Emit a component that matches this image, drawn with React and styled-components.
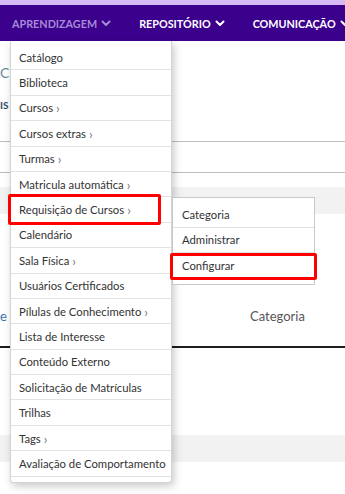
import React from "react";
import styled, { createGlobalStyle } from "styled-components";

const Global = createGlobalStyle`
  html, body { margin: 0; padding: 0; background: #fff; }
  body { font-family: Lato, "Noto Sans", sans-serif; }
  * { box-sizing: border-box; }
`;

const Page = styled.div`
  position: relative;
  width: 345px;
  height: 494px;
  overflow: hidden;
  background: #fff;
`;

const TopStrip = styled.div`
  height: 5px;
  background: #d7baf5;
`;

const Nav = styled.nav`
  height: 36px;
  background: #3b008c;
  display: flex;
  align-items: center;
  padding-left: 12px;
  gap: 28px;
  white-space: nowrap;
`;

const NavItem = styled.div`
  display: flex;
  align-items: center;
  gap: 4px;
  font-size: 10.8px;
  font-weight: 700;
  color: ${(p) => (p.$active ? "#a68ad8" : "#ffffff")};
`;

const Chevron = ({ color }) => (
  <svg width="10" height="7" viewBox="0 0 10 7">
    <path d="M1.5 1.5 L5 5 L8.5 1.5" fill="none" stroke={color} strokeWidth="2" strokeLinecap="round" strokeLinejoin="round" />
  </svg>
);

const Content = styled.div`
  position: relative;
  height: 453px;
`;

const Title = styled.div`
  padding-top: 22px;
  font-size: 14px;
  line-height: 20px;
  color: #5f8c9a;
  white-space: nowrap;
`;

const Subtitle = styled.div`
  margin-top: 15px;
  font-size: 10px;
  font-weight: 700;
  line-height: 14px;
  color: #2c4a6b;
  white-space: nowrap;
`;

const Divider = styled.div`
  height: ${(p) => p.$h || 1}px;
  background: ${(p) => p.$color || "#bdbdbd"};
  margin-top: ${(p) => p.$mt || 0}px;
`;

const Band = styled.div`
  height: 27px;
  background: #f2f2f2;
  margin-top: ${(p) => p.$mt || 0}px;
`;

const HeaderRow = styled.div`
  display: flex;
  align-items: center;
  height: 20px;
  margin-top: 92px;
  font-size: 13px;
  color: #555;
  white-space: nowrap;
`;

const HeaderLeft = styled.div`
  width: 250px;
  color: #333;
`;

const BlueText = styled.span`
  color: #3a6fb0;
`;

const Menu = styled.div`
  position: absolute;
  left: 10px;
  top: 0;
  width: 162px;
  background: #fff;
  border: 1px solid #d4d4d4;
  border-top: none;
  border-radius: 0 0 3px 3px;
  box-shadow: 2px 3px 8px rgba(0, 0, 0, 0.22);
  padding: 4px 0 5px;
  z-index: 2;
`;

const Item = styled.div`
  position: relative;
  display: flex;
  align-items: center;
  height: 25.4px;
  padding: 0 8px;
  border-bottom: 1px solid #e3e3e3;
  font-size: 11.3px;
  color: #333;
  white-space: nowrap;
`;

const Arrow = styled.span`
  margin-left: 3px;
  font-size: 13px;
  line-height: 1;
  color: #777;
  position: relative;
  top: 1px;
`;

const SubMenu = styled.div`
  position: absolute;
  left: calc(100% + 1px);
  top: 0;
  width: 143px;
  background: #fff;
  border: 1px solid #c8c8c8;
  padding: 4px 0 5px;
  z-index: 3;
`;

const SubItem = styled(Item)`
  padding-left: 9px;
  border-bottom: ${(p) => (p.$last ? "none" : "1px solid #e3e3e3")};
`;

const Highlight = styled.div`
  position: absolute;
  left: ${(p) => p.$l}px;
  top: ${(p) => p.$t}px;
  width: ${(p) => p.$w}px;
  height: ${(p) => p.$h}px;
  border: 3px solid #ff0000;
  border-radius: 2px;
  pointer-events: none;
  z-index: 4;
`;

const items = [
  ["Catálogo"],
  ["Biblioteca"],
  ["Cursos", true],
  ["Cursos extras", true],
  ["Turmas", true],
  ["Matricula automática", true],
  ["Requisição de Cursos", true, "sub"],
  ["Calendário"],
  ["Sala Física", true],
  ["Usuários Certificados"],
  ["Pílulas de Conhecimento", true],
  ["Lista de Interesse"],
  ["Conteúdo Externo"],
  ["Solicitação de Matrículas"],
  ["Trilhas"],
  ["Tags", true],
  ["Avaliação de Comportamento"],
];

const subItems = ["Categoria", "Administrar", "Configurar"];

export default function App() {
  return (
    <Page>
      <Global />
      <TopStrip />
      <Nav>
        <NavItem $active>
          APRENDIZAGEM <Chevron color="#a68ad8" />
        </NavItem>
        <NavItem>
          REPOSITÓRIO <Chevron color="#ffffff" />
        </NavItem>
        <NavItem>
          COMUNICAÇÃO <Chevron color="#ffffff" />
        </NavItem>
      </Nav>
      <Content>
        <Title>CU</Title>
        <Subtitle>IS</Subtitle>
        <Divider $mt={29} />
        <Divider $mt={30} />
        <Band $mt={14} />
        <HeaderRow>
          <HeaderLeft>
            <BlueText>e</BlueText> c
          </HeaderLeft>
          <div>Categoria</div>
        </HeaderRow>
        <Divider $mt={20} $h={2} $color="#1e1e1e" />
        <Band $mt={87} />

        <Menu>
          {items.map(([label, hasArrow, sub]) => (
            <Item key={label}>
              {label}
              {hasArrow && <Arrow>›</Arrow>}
              {sub && (
                <>
                  <Highlight $l={-3} $t={-3} $w={153} $h={31} />
                  <SubMenu>
                    {subItems.map((s, i) => (
                      <SubItem key={s} $last={i === subItems.length - 1}>
                        {s}
                        {i === 2 && <Highlight $l={-3} $t={0} $w={147} $h={27} />}
                      </SubItem>
                    ))}
                  </SubMenu>
                </>
              )}
            </Item>
          ))}
        </Menu>
      </Content>
    </Page>
  );
}
